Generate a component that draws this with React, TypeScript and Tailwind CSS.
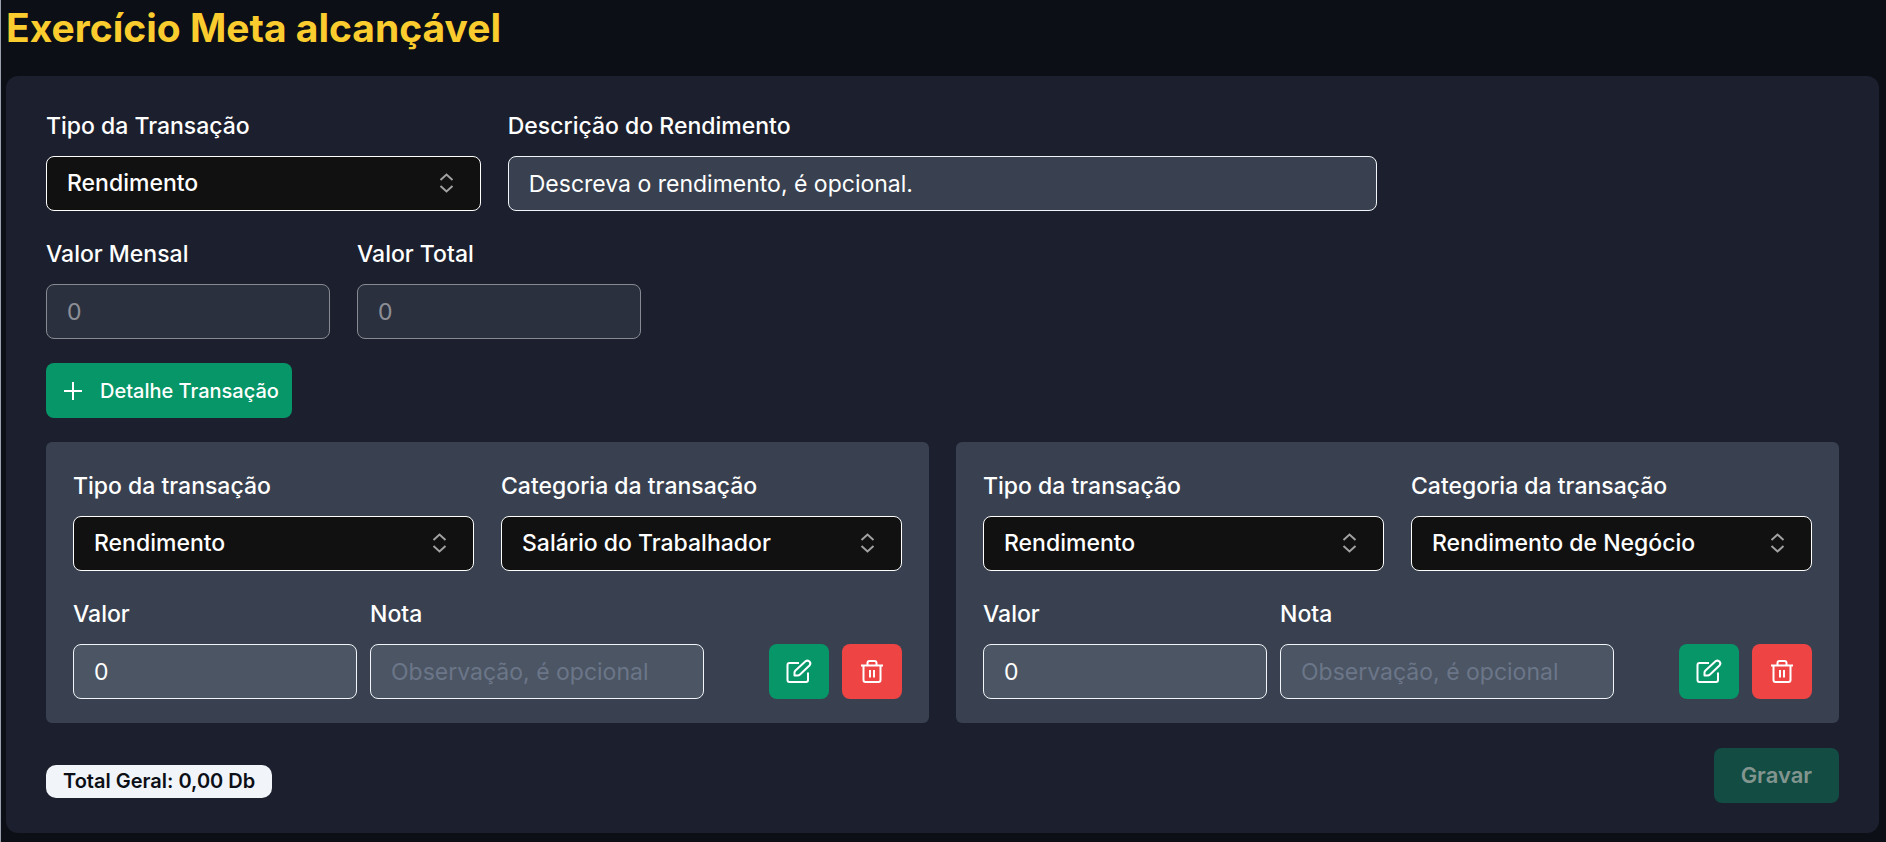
import { useState } from 'react';
import type { ReactNode } from 'react';

interface SelectFieldProps {
  id: string;
  label: string;
  options: string[];
}

interface TextFieldProps {
  id: string;
  label: string;
  className: string;
  defaultValue?: string;
  placeholder?: string;
  disabled?: boolean;
}

const tipos = ['Rendimento', 'Despesa'];

const detalhes = [
  { id: 'detalhe-1', categorias: ['Salário do Trabalhador', 'Rendimento de Negócio'] },
  { id: 'detalhe-2', categorias: ['Rendimento de Negócio', 'Salário do Trabalhador'] }
];

function Field({ id, label, children }: { id: string; label: string; children: ReactNode }) {
  return (
    <div className="min-w-0">
      <label htmlFor={id} className="mb-3 block text-[23px] leading-[35px] font-medium text-white">
        {label}
      </label>
      {children}
    </div>
  );
}

function SelectField({ id, label, options }: SelectFieldProps) {
  const [value, setValue] = useState(options[0]);

  return (
    <Field id={id} label={label}>
      <div className="relative">
        <select
          id={id}
          value={value}
          onChange={(e) => setValue(e.target.value)}
          className="h-[55px] w-full appearance-none rounded-lg border border-white bg-[#111111] pl-5 pr-16 text-[23px] font-medium text-white"
        >
          {options.map((option) => (
            <option key={option}>{option}</option>
          ))}
        </select>
        <svg
          viewBox="0 0 28 28"
          fill="none"
          stroke="currentColor"
          strokeWidth="2"
          className="pointer-events-none absolute inset-y-0 right-5 my-auto size-7 text-neutral-400"
        >
          <path d="M7.5 10 13.5 4.5 19.5 10M7.5 16 13.5 21.5 19.5 16" />
        </svg>
      </div>
    </Field>
  );
}

function TextField({ id, label, className, ...props }: TextFieldProps) {
  return (
    <Field id={id} label={label}>
      <input
        id={id}
        type="text"
        className={`h-[55px] max-w-full rounded-lg border border-slate-100 px-5 text-[23px] text-white disabled:opacity-50 ${className}`}
        {...props}
      />
    </Field>
  );
}

function EditIcon() {
  return (
    <svg viewBox="0 0 28 28" fill="none" stroke="currentColor" strokeWidth="2" strokeLinejoin="round" className="size-7">
      <path d="M14 5H4.5A2 2 0 0 0 2.500 7V22A2 2 0 0 0 4.500 24H21A2 2 0 0 0 23 22V14.500" />
      <path d="M9.500 17.500V14.500Q9.500 13.500 10.500 12.500L20 3.700A2.700 2.700 0 0 1 24.500 7.500L15 16.500Q14 17.500 12.500 17.500Z" />
    </svg>
  );
}

function TrashIcon() {
  return (
    <svg viewBox="0 0 28 28" fill="none" stroke="currentColor" strokeWidth="2" strokeLinejoin="round" className="size-7">
      <path d="M3 7.500H25M5.500 7.500V22A2 2 0 0 0 7.500 24H20.500A2 2 0 0 0 22.500 22V7.500" />
      <path d="M9.500 7.500V5A2 2 0 0 1 11.500 3H16.500A2 2 0 0 1 18.500 5V7.500M12 12V19.500M16 12V19.500" />
    </svg>
  );
}

function DetalheCard({ id, categorias }: { id: string; categorias: string[] }) {
  return (
    <div className="rounded-md bg-[#394150] px-[27px] pt-[27px] pb-6">
      <div className="grid gap-[27px] md:grid-cols-2">
        <SelectField id={`${id}-tipo`} label="Tipo da transação" options={tipos} />
        <SelectField id={`${id}-categoria`} label="Categoria da transação" options={categorias} />
      </div>

      <div className="mt-[26px] flex flex-wrap items-end gap-[13px]">
        <TextField id={`${id}-valor`} label="Valor" defaultValue="0" className="w-[284px] bg-[#4c5563]" />
        <TextField
          id={`${id}-nota`}
          label="Nota"
          placeholder="Observação, é opcional"
          className="w-[334px] bg-[#4c5563] placeholder:text-[#6b7689]"
        />
        <div className="ml-auto flex gap-[13px]">
          <button
            type="button"
            aria-label="Editar"
            className="flex h-[55px] w-[60px] items-center justify-center rounded-lg bg-[#069668] text-white hover:bg-emerald-700"
          >
            <EditIcon />
          </button>
          <button
            type="button"
            aria-label="Apagar"
            className="flex h-[55px] w-[60px] items-center justify-center rounded-lg bg-[#ef4444] text-white hover:bg-red-600"
          >
            <TrashIcon />
          </button>
        </div>
      </div>
    </div>
  );
}

export default function App() {
  return (
    <main className="min-h-screen border-l border-gray-400 bg-[#0c0f16] pr-[7px] pb-2 pl-[5px] font-['Inter',sans-serif]">
      <h1 className="pt-1 text-[39px] leading-[48px] font-bold text-[#facc2e]">Exercício Meta alcançável</h1>

      <form className="mt-6 rounded-xl bg-[#1c1f2d] px-10 pt-[33px] pb-[30px]">
        <div className="grid gap-[27px] md:grid-cols-[1fr_2fr_1fr]">
          <SelectField id="tipo" label="Tipo da Transação" options={tipos} />
          <TextField
            id="descricao"
            label="Descrição do Rendimento"
            defaultValue="Descreva o rendimento, é opcional."
            className="w-full bg-[#394150]"
          />
        </div>

        <div className="mt-[26px] flex flex-wrap gap-[27px]">
          <TextField id="valor-mensal" label="Valor Mensal" defaultValue="0" disabled className="w-[284px] bg-[#394150]" />
          <TextField id="valor-total" label="Valor Total" defaultValue="0" disabled className="w-[284px] bg-[#394150]" />
        </div>

        <button
          type="button"
          className="mt-6 flex h-[55px] items-center gap-[17px] rounded-lg bg-[#069668] pr-[13px] pl-[17px] text-xl font-medium text-white hover:bg-emerald-700"
        >
          <svg viewBox="0 0 20 20" fill="none" stroke="currentColor" strokeWidth="2" className="size-5">
            <path d="M10 1V19M1 10H19" />
          </svg>
          Detalhe Transação
        </button>

        <div className="mt-6 grid gap-[27px] xl:grid-cols-2">
          {detalhes.map((detalhe) => (
            <DetalheCard key={detalhe.id} {...detalhe} />
          ))}
        </div>

        <div className="mt-[25px] flex items-end justify-between">
          <span className="mb-[5px] rounded-[10px] bg-slate-100 px-[17px] text-xl leading-[33px] font-semibold text-[#0c0f16]">
            Total Geral: 0,00 Db
          </span>
          <button
            type="submit"
            disabled
            className="h-[55px] rounded-lg bg-[#124c43] px-[27px] text-[22px] font-semibold text-[#82958f]"
          >
            Gravar
          </button>
        </div>
      </form>
    </main>
  );
}
